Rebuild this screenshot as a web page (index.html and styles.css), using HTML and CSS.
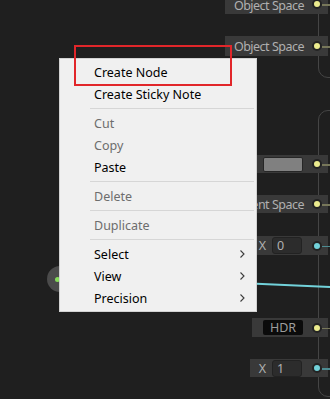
FILE: index.html
```html
<!DOCTYPE html>
<html lang="en">
<head>
    <meta charset="UTF-8">
    <meta name="viewport" content="width=device-width, initial-scale=1.0">
    <title>Graph Context Menu</title>
    <link rel="stylesheet" href="styles.css">
</head>
<body>
    <div class="graph">
        <!-- node outlines on the right side -->
        <div class="node-edge node-top"></div>
        <div class="node-edge node-bottom"></div>

        <svg class="wires" width="330" height="399" viewBox="0 0 330 399">
            <polyline points="60,279 200,281.2 330,287" />
        </svg>

        <div class="out-node"><span class="out-dot"></span></div>

        <div class="port port-1">
            <span class="port-label">Object Space</span>
            <span class="dot dot-yellow"></span>
        </div>
        <div class="port port-2">
            <span class="port-label">Object Space</span>
            <span class="dot dot-yellow"></span>
        </div>
        <div class="port port-3">
            <span class="swatch"></span>
            <span class="dot dot-yellow"></span>
        </div>
        <div class="port port-4">
            <span class="port-label">Tangent Space</span>
            <span class="dot dot-yellow"></span>
        </div>
        <div class="port port-5">
            <span class="axis">X</span>
            <span class="field">0</span>
            <span class="dot dot-cyan"></span>
        </div>
        <div class="port port-6">
            <span class="hdr">HDR</span>
            <span class="dot dot-yellow"></span>
        </div>
        <div class="port port-7">
            <span class="axis">X</span>
            <span class="field">1</span>
            <span class="dot dot-cyan"></span>
        </div>
    </div>

    <div class="context-menu">
        <div class="menu-item">Create Node</div>
        <div class="menu-item">Create Sticky Note</div>
        <div class="menu-sep"></div>
        <div class="menu-item disabled">Cut</div>
        <div class="menu-item disabled">Copy</div>
        <div class="menu-item">Paste</div>
        <div class="menu-sep"></div>
        <div class="menu-item disabled">Delete</div>
        <div class="menu-sep"></div>
        <div class="menu-item disabled">Duplicate</div>
        <div class="menu-sep"></div>
        <div class="menu-item has-sub">Select
            <svg class="chevron" width="5" height="8" viewBox="0 0 5 8"><polyline points="0.5,0.5 4,4 0.5,7.5" /></svg>
        </div>
        <div class="menu-item has-sub">View
            <svg class="chevron" width="5" height="8" viewBox="0 0 5 8"><polyline points="0.5,0.5 4,4 0.5,7.5" /></svg>
        </div>
        <div class="menu-item has-sub">Precision
            <svg class="chevron" width="5" height="8" viewBox="0 0 5 8"><polyline points="0.5,0.5 4,4 0.5,7.5" /></svg>
        </div>
    </div>

    <div class="highlight"></div>
</body>
</html>
```

FILE: styles.css
```css
:root {
    --bg-color: #1f1f1f;
    --port-bg: #393939;
    --port-text: #b0b0b0;
    --edge-color: #454545;
    --yellow: #ecec8e;
    --cyan: #72d2da;
    --menu-bg: #f0f0f0;
    --menu-border: #d2d2d2;
    --menu-text: #000;
    --menu-disabled: #6d6d6d;
    --accent-red: #e1262a;
}

* {
    box-sizing: border-box;
    margin: 0;
    padding: 0;
}

body {
    position: relative;
    width: 330px;
    height: 399px;
    overflow: hidden;
    background: var(--bg-color);
    font-family: 'Noto Sans', 'Open Sans', sans-serif;
}

.graph {
    position: absolute;
    inset: 0;
}

.node-edge {
    position: absolute;
    left: 318px;
    width: 40px;
    border: 1px solid var(--edge-color);
    border-radius: 10px;
}

.node-top {
    top: -20px;
    height: 98px;
}

.node-bottom {
    top: 110px;
    height: 287px;
}

.wires {
    position: absolute;
    left: 0;
    top: 0;
}

.wires polyline {
    fill: none;
    stroke: var(--cyan);
    stroke-width: 2;
}

.out-node {
    position: absolute;
    left: 47px;
    top: 266px;
    width: 26px;
    height: 26px;
    border-radius: 50%;
    background: #4b4b4b;
}

.out-dot {
    position: absolute;
    left: 8px;
    top: 10.5px;
    width: 5px;
    height: 5px;
    border-radius: 50%;
    background: #86dc5c;
}

/* ports */
.port {
    position: absolute;
    right: 2px;
    display: flex;
    align-items: center;
    justify-content: flex-end;
    gap: 8px;
    padding: 0 6px 0 9px;
    background: var(--port-bg);
    color: var(--port-text);
    font-size: 12.5px;
}

.port-1 { top: -6px; height: 20px; padding-top: 2px; }
.port-2 { top: 36px; height: 20px; }
.port-3 { top: 155px; height: 18px; }
.port-4 { top: 195px; height: 18px; }
.port-5 { top: 236px; height: 19px; }
.port-6 { top: 318px; height: 19px; padding-left: 11px; }
.port-7 { top: 359px; height: 18px; }

.port-label {
    white-space: nowrap;
    letter-spacing: -0.5px;
}

.dot {
    position: relative;
    flex: none;
    width: 10px;
    height: 10px;
    border-radius: 50%;
    border: 2px solid #232323;
}

.port-1 .dot {
    margin-top: -2px;
}

.dot::after {
    content: "";
    position: absolute;
    left: 8px;
    top: 3px;
    width: 12px;
    height: 1.5px;
}

.dot-yellow {
    background: var(--yellow);
}

.dot-yellow::after {
    background: #77775a;
}

.dot-cyan {
    background: var(--cyan);
}

.dot-cyan::after {
    background: #4d8c92;
}

.swatch {
    width: 40px;
    height: 15px;
    background: #808080;
    border: 1px solid #262626;
    border-radius: 2px;
    margin-right: 1px;
}

.axis {
    margin-right: -2px;
}

.field {
    width: 30px;
    height: 17px;
    padding-left: 4px;
    line-height: 15px;
    background: #2c2c2c;
    border: 1px solid #222;
    border-radius: 3px;
    margin-right: 2px;
}

.hdr {
    width: 40px;
    height: 15px;
    line-height: 15px;
    text-align: center;
    background: #0b0b0b;
    color: #9c9c9c;
    border-radius: 2px;
    margin-right: 1px;
}

/* context menu */
.context-menu {
    position: absolute;
    left: 59px;
    top: 58px;
    width: 198px;
    padding: 2px 0;
    background: var(--menu-bg);
    border: 1px solid var(--menu-border);
    font-size: 12.5px;
    color: var(--menu-text);
}

.menu-item {
    display: flex;
    align-items: center;
    justify-content: space-between;
    height: 22px;
    padding: 0 11px 0 34px;
}

.menu-item.disabled {
    color: var(--menu-disabled);
}

.menu-sep {
    height: 1px;
    margin: 3px 2px 3px 30px;
    background: #d6d6d6;
}

.chevron polyline {
    fill: none;
    stroke: #3c3c3c;
    stroke-width: 1.1;
}

.highlight {
    position: absolute;
    left: 74px;
    top: 45px;
    width: 158px;
    height: 41px;
    border: 2px solid var(--accent-red);
}
```
